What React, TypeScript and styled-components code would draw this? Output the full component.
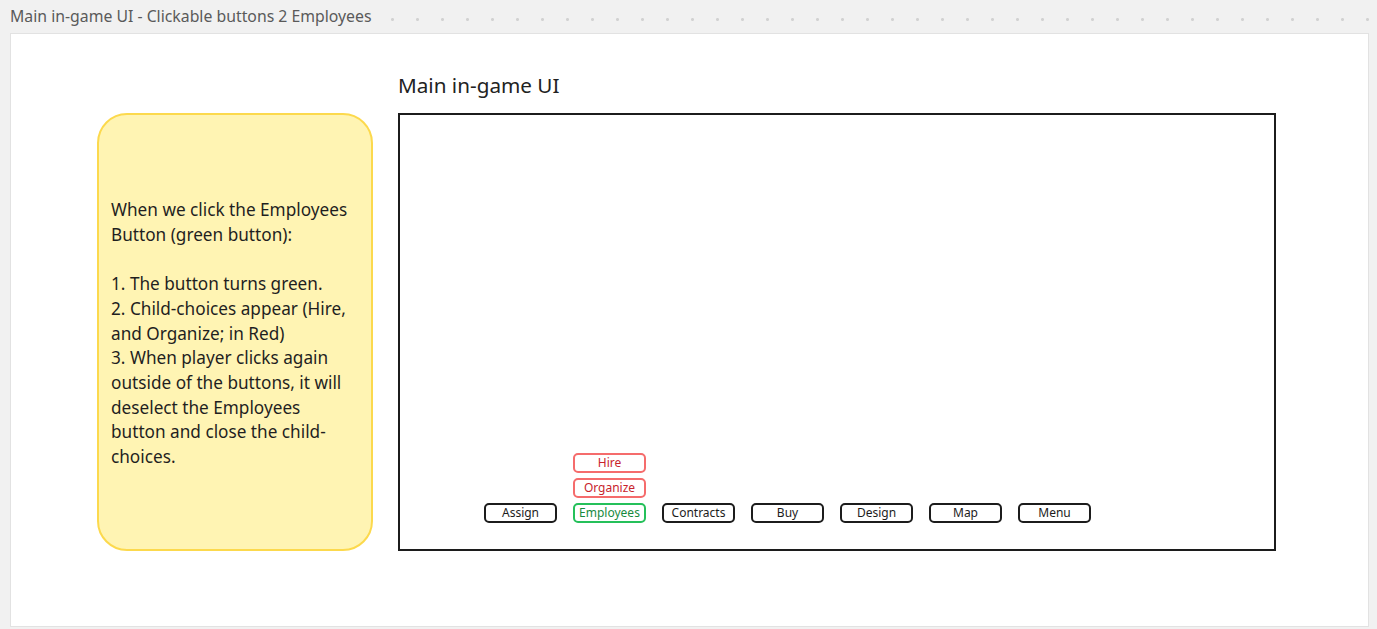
import React from "react";
import styled, { createGlobalStyle } from "styled-components";

const Global = createGlobalStyle`
  html, body { margin: 0; padding: 0; }
  body {
    background: #f1f1f1;
    font-family: "Noto Sans", "Open Sans", sans-serif;
    width: 1377px;
    height: 629px;
    overflow: hidden;
  }
`;

const Page = styled.div`
  display: flex;
  flex-direction: column;
  width: 1377px;
  height: 629px;
`;

const Header = styled.div`
  height: 33px;
  display: flex;
  align-items: center;
  padding-left: 10px;
  box-sizing: border-box;
  background-image: radial-gradient(circle, #d2d2d2 1.3px, transparent 1.6px);
  background-size: 25px 25px;
  background-position: 380px 7px;
  background-repeat: repeat-x;
`;

const HeaderTitle = styled.span`
  font-size: 15.8px;
  color: #5a5a5a;
  background: #f1f1f1;
  padding-right: 8px;
  line-height: 20px;
  margin-top: -2px;
`;

const Frame = styled.div`
  margin-left: 10px;
  width: 1359px;
  height: 594px;
  box-sizing: border-box;
  background: #ffffff;
  border: 1px solid #e2e2e2;
  display: flex;
  align-items: flex-end;
  gap: 25px;
  padding: 0 0 75px 86px;
`;

const Note = styled.div`
  width: 276px;
  height: 438px;
  box-sizing: border-box;
  background: #fff4b3;
  border: 2px solid #fcd94d;
  border-radius: 30px;
  padding: 4px 12px 0;
  display: flex;
  align-items: center;
`;

const NoteText = styled.p`
  margin: 0;
  font-size: 17.2px;
  line-height: 24.7px;
  color: #1f1f1f;
  white-space: pre-line;
`;

const MainColumn = styled.div`
  display: flex;
  flex-direction: column;
  gap: 14px;
`;

const MainTitle = styled.div`
  font-size: 20.7px;
  line-height: 28px;
  color: #222;
`;

const Screen = styled.div`
  width: 878px;
  height: 438px;
  box-sizing: border-box;
  border: 2px solid #1c1c1c;
  display: flex;
  align-items: flex-end;
  padding: 0 0 26px 84px;
`;

const ButtonRow = styled.div`
  display: flex;
  align-items: flex-end;
  gap: 16px;
`;

const ButtonStack = styled.div`
  display: flex;
  flex-direction: column;
  gap: 5px;
`;

type Variant = "normal" | "active" | "child";

const GameButton = styled.div<{ $variant: Variant }>`
  width: 73px;
  height: 20px;
  box-sizing: border-box;
  border-radius: 5px;
  border: 2px solid
    ${(p) =>
      p.$variant === "active" ? "#25c05a" : p.$variant === "child" ? "#f56c6c" : "#1c1c1c"};
  color: ${(p) =>
    p.$variant === "active" ? "#178a3e" : p.$variant === "child" ? "#c8232c" : "#1c1c1c"};
  font-size: 12px;
  line-height: 16px;
  display: flex;
  align-items: center;
  justify-content: center;
  background: #fff;
`;

const noteText = `When we click the Employees Button (green button):

1. The button turns green.
2. Child-choices appear (Hire, and Organize; in Red)
3. When player clicks again outside of the buttons, it will deselect the Employees button and close the child-choices.`;

const buttons = ["Assign", "Employees", "Contracts", "Buy", "Design", "Map", "Menu"];

export default function App() {
  return (
    <>
      <Global />
      <Page>
        <Header>
          <HeaderTitle>Main in-game UI - Clickable buttons 2 Employees</HeaderTitle>
        </Header>
        <Frame>
          <Note>
            <NoteText>{noteText}</NoteText>
          </Note>
          <MainColumn>
            <MainTitle>Main in-game UI</MainTitle>
            <Screen>
              <ButtonRow>
                {buttons.map((b) =>
                  b === "Employees" ? (
                    <ButtonStack key={b}>
                      <GameButton $variant="child">Hire</GameButton>
                      <GameButton $variant="child">Organize</GameButton>
                      <GameButton $variant="active">Employees</GameButton>
                    </ButtonStack>
                  ) : (
                    <GameButton key={b} $variant="normal">
                      {b}
                    </GameButton>
                  )
                )}
              </ButtonRow>
            </Screen>
          </MainColumn>
        </Frame>
      </Page>
    </>
  );
}
